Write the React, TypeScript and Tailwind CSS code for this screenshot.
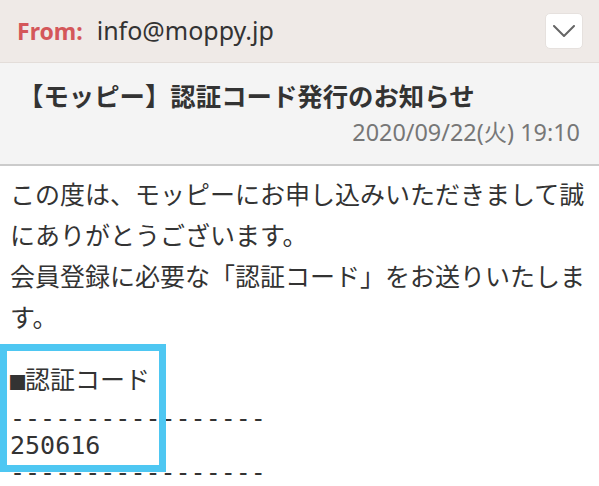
const jp = "font-['Noto_Sans_CJK_JP',sans-serif]";

const ChevronDown = () => (
  <svg width="22" height="12" viewBox="0 0 22 12" fill="none">
    <path d="M1 1 L11 11 L21 1" stroke="#666" strokeWidth="2" strokeLinecap="round" strokeLinejoin="round" />
  </svg>
);

export default function App() {
  return (
    <div className={`w-[599px] h-[486px] overflow-hidden bg-white ${jp}`}>
      <div className="h-[63px] bg-[#efeae7] border-b border-[#e3ddd9] flex items-center pl-[17px] pr-[16px]">
        <div className="flex items-baseline">
          <span className="font-['Noto_Sans',sans-serif] font-bold text-[23px] text-[#d4575a]">From:</span>
          <span className="ml-[14px] font-['Noto_Sans',sans-serif] text-[25px] text-[#333]">info@moppy.jp</span>
        </div>
        <button className="ml-auto w-[38px] h-[36px] bg-white rounded-[5px] border border-[#e6e1de] flex items-center justify-center">
          <ChevronDown />
        </button>
      </div>

      <div className="h-[103px] bg-[#f4f4f4] border-b-2 border-[#cbcbcb] pl-[18px] pr-[19px]">
        <div className="pt-[14px] text-[25.4px] leading-[36px] font-bold text-[#333]">【モッピー】認証コード発行のお知らせ</div>
        <div className="mt-[4px] text-right font-['Noto_Sans','Noto_Sans_CJK_JP',sans-serif] text-[23.4px] leading-[30px] text-[#777]">
          2020/09/22(火) 19:10
        </div>
      </div>

      <div className="px-[10px] pt-[7px] text-[25px] leading-[41px] text-[#333]">
        <p>
          この度は、モッピーにお申し込みいただきまして誠
          <br />
          にありがとうございます。
          <br />
          会員登録に必要な「認証コード」をお送りいたしま
          <br />
          す。
        </p>

        <div className="relative mt-[21px]">
          <div className="whitespace-nowrap">
            <span className="font-['DejaVu_Sans_Mono',monospace] text-[#333]">■</span>認証コード
          </div>
          <div className="mt-[4px] font-['DejaVu_Sans_Mono',monospace] text-[25px] leading-[27px] text-[#333] whitespace-pre">
            <div>-----------------</div>
            <div>250616</div>
            <div>-----------------</div>
          </div>
          <div className="absolute left-[-10px] top-[-14px] w-[166px] h-[128px] border-[7px] border-[#4ec7f2]" />
        </div>
      </div>
    </div>
  );
}
